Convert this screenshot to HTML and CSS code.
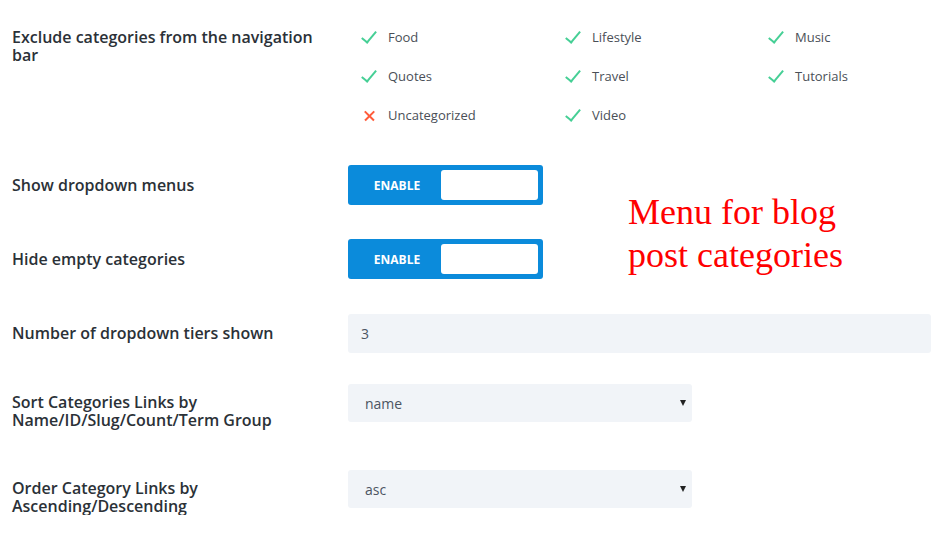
FILE: index.html
```html
<!doctype html>
<html lang="en">
<head>
  <meta charset="utf-8">
  <title>Category Menu Settings</title>
  <link rel="stylesheet" href="styles.css">
</head>
<body>
  <div class="settings">

    <div class="row row-top">
      <div class="label">Exclude categories from the navigation bar</div>
      <ul class="cats">
        <li><span class="ico ok"></span>Food</li>
        <li><span class="ico ok"></span>Lifestyle</li>
        <li><span class="ico ok"></span>Music</li>
        <li><span class="ico ok"></span>Quotes</li>
        <li><span class="ico ok"></span>Travel</li>
        <li><span class="ico ok"></span>Tutorials</li>
        <li><span class="ico no"></span>Uncategorized</li>
        <li><span class="ico ok"></span>Video</li>
      </ul>
    </div>

    <div class="row row-center gap-40">
      <div class="label">Show dropdown menus</div>
      <div class="toggle"><span class="toggle-text">ENABLE</span><span class="toggle-knob"></span></div>
    </div>

    <div class="row row-center gap-34">
      <div class="label">Hide empty categories</div>
      <div class="toggle"><span class="toggle-text">ENABLE</span><span class="toggle-knob"></span></div>
    </div>

    <div class="row row-center gap-35">
      <div class="label label-up">Number of dropdown tiers shown</div>
      <input class="field" type="text" value="3">
    </div>

    <div class="row row-top gap-31">
      <div class="label label-two">Sort Categories Links by Name/ID/Slug/Count/Term Group</div>
      <span class="select-wrap">
        <select class="select">
          <option>name</option>
          <option>id</option>
          <option>slug</option>
          <option>count</option>
          <option>term_group</option>
        </select>
      </span>
    </div>

    <div class="row row-top gap-41">
      <div class="label label-two">Order Category Links by Ascending/Descending</div>
      <span class="select-wrap">
        <select class="select">
          <option>asc</option>
          <option>desc</option>
        </select>
      </span>
    </div>

  </div>

  <div class="note">Menu for blog<br>post categories</div>
</body>
</html>
```
FILE: styles.css
```css
body {
  margin: 0;
  font-family: "Open Sans", Arial, sans-serif;
  background-color: #fff;
  color: #2b3137;
}
.settings {
  padding: 27px 0 0 12px;
}
.row {
  display: flex;
}
.row-top {
  align-items: flex-start;
}
.row-center {
  align-items: center;
}
.gap-31 { margin-top: 31px; }
.gap-34 { margin-top: 34px; }
.gap-35 { margin-top: 35px; }
.gap-40 { margin-top: 40px; }
.gap-41 { margin-top: 41px; }

.label {
  flex: none;
  width: 336px;
  padding-right: 20px;
  box-sizing: border-box;
  font-size: 16px;
  line-height: 18px;
  font-weight: 600;
}
.row-top .label {
  padding-top: 1px;
}
.row-top .label-two {
  padding-top: 9px;
}
.label-up {
  margin-top: -2px;
}

.cats {
  list-style: none;
  margin: 0;
  padding: 0 0 0 14px;
  display: grid;
  grid-template-columns: 204px 203px 150px;
  row-gap: 19px;
}
.cats li {
  display: flex;
  align-items: center;
  height: 20px;
  font-size: 13px;
  color: #4a4f57;
}
.ico {
  width: 15px;
  height: 14px;
  margin-right: 11px;
  position: relative;
}
.ok::before {
  content: "";
  position: absolute;
  left: 3px;
  top: -2px;
  width: 6px;
  height: 13px;
  border-right: 2px solid #45cf95;
  border-bottom: 2px solid #45cf95;
  transform: rotate(40deg);
  transform-origin: center;
}
.no::before,
.no::after {
  content: "";
  position: absolute;
  left: 1px;
  top: 7px;
  width: 13px;
  height: 1.6px;
  background-color: #ff5b3a;
  transform: rotate(45deg);
}
.no::after {
  transform: rotate(-45deg);
}

.toggle {
  display: flex;
  align-items: center;
  width: 195px;
  height: 40px;
  padding: 5px;
  box-sizing: border-box;
  background-color: #0b8bdb;
  border-radius: 3px;
}
.toggle-text {
  width: 88px;
  text-align: center;
  color: #fff;
  font-size: 12px;
  font-weight: 700;
}
.toggle-knob {
  flex: 1;
  height: 30px;
  background-color: #fff;
  border-radius: 3px;
}

.field {
  width: 620px;
  height: 39px;
  box-sizing: border-box;
  border: none;
  border-radius: 3px;
  background-color: #f1f4f8;
  padding: 0 13px;
  font-family: "Open Sans", Arial, sans-serif;
  font-size: 14px;
  color: #4c5562;
}

.select-wrap {
  position: relative;
  display: block;
}
.select-wrap::after {
  content: "";
  position: absolute;
  right: 6px;
  top: 16px;
  border-left: 3px solid transparent;
  border-right: 3px solid transparent;
  border-top: 6px solid #222;
  pointer-events: none;
}
.select {
  display: block;
  width: 344px;
  height: 38px;
  box-sizing: border-box;
  border: none;
  border-radius: 3px;
  background-color: #f1f4f8;
  padding: 1px 17px 0;
  font-family: "Open Sans", Arial, sans-serif;
  font-size: 14px;
  color: #4c5562;
  appearance: none;
  -webkit-appearance: none;
}

.note {
  position: absolute;
  left: 628px;
  top: 191px;
  font-family: "Liberation Serif", "Times New Roman", serif;
  font-size: 36px;
  line-height: 43px;
  color: #ff0000;
}
```
